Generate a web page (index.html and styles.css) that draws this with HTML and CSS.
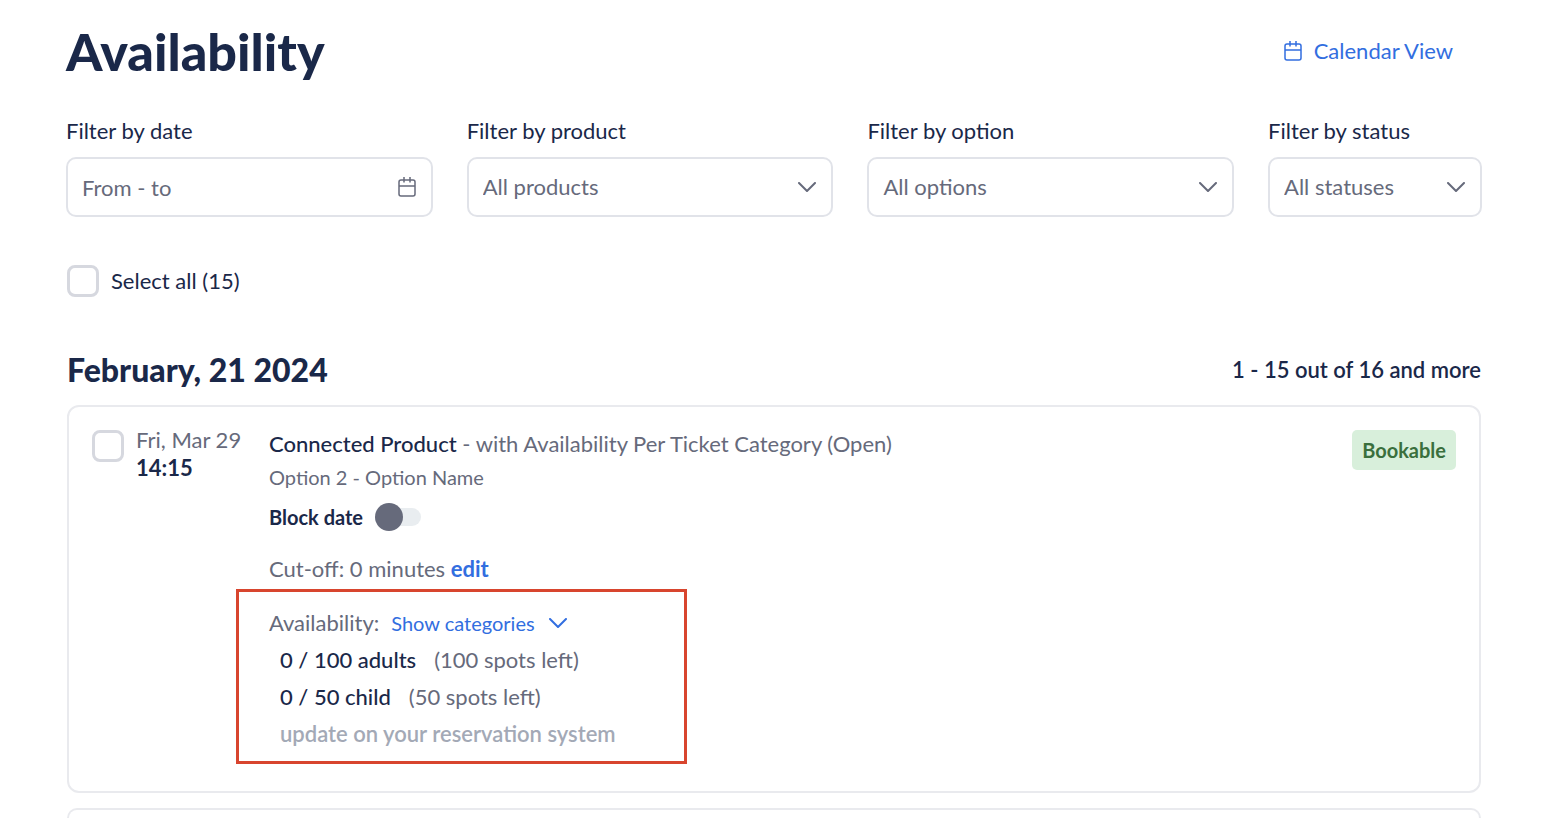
FILE: index.html
```
<!DOCTYPE html>
<html lang="en">
<head>
    <meta charset="UTF-8">
    <meta name="viewport" content="width=device-width, initial-scale=1.0">
    <title>Availability</title>
    <link rel="stylesheet" href="styles.css">
</head>
<body>
    <header class="header">
        <h1>Availability</h1>
        <a href="#" class="calendar-link">
            <svg class="calendar-icon" viewBox="0 0 18 20" aria-hidden="true">
                <path d="M3 3h12a2 2 0 0 1 2 2v12a2 2 0 0 1-2 2H3a2 2 0 0 1-2-2V5a2 2 0 0 1 2-2zM1 9h16M6 0v5.500M12 0v5.500"/>
            </svg>
            Calendar View
        </a>
    </header>

    <form class="filters">
        <div class="filter">
            <label for="date">Filter by date</label>
            <div class="field">
                <input type="text" id="date" placeholder="From - to">
                <svg class="calendar-icon" viewBox="0 0 18 20" aria-hidden="true">
                    <path d="M3 3h12a2 2 0 0 1 2 2v12a2 2 0 0 1-2 2H3a2 2 0 0 1-2-2V5a2 2 0 0 1 2-2zM1 9h16M6 0v5.500M12 0v5.500"/>
                </svg>
            </div>
        </div>
        <div class="filter">
            <label for="product">Filter by product</label>
            <div class="field">
                <select id="product"><option>All products</option></select>
                <svg class="chevron" viewBox="0 0 18 10" aria-hidden="true"><path d="M1 1l8 8 8-8"/></svg>
            </div>
        </div>
        <div class="filter">
            <label for="option">Filter by option</label>
            <div class="field">
                <select id="option"><option>All options</option></select>
                <svg class="chevron" viewBox="0 0 18 10" aria-hidden="true"><path d="M1 1l8 8 8-8"/></svg>
            </div>
        </div>
        <div class="filter">
            <label for="status">Filter by status</label>
            <div class="field">
                <select id="status"><option>All statuses</option></select>
                <svg class="chevron" viewBox="0 0 18 10" aria-hidden="true"><path d="M1 1l8 8 8-8"/></svg>
            </div>
        </div>
    </form>

    <div class="select-all">
        <input type="checkbox" id="selectAll" class="checkbox">
        <label for="selectAll">Select all (15)</label>
    </div>

    <div class="day">
        <h2>February, 21 2024</h2>
        <p class="count">1 - 15 out of 16 and more</p>
    </div>

    <main class="list">
        <article class="card">
            <input type="checkbox" class="checkbox" id="slot1">
            <label for="slot1" class="when">Fri, Mar 29<strong>14:15</strong></label>
            <div class="details">
                <p class="product"><span class="dark">Connected Product</span> - with Availability Per Ticket Category (Open)</p>
                <p class="option">Option 2 - Option Name</p>
                <div class="block-date">
                    <label for="block">Block date</label>
                    <input type="checkbox" role="switch" id="block" class="toggle">
                </div>
                <p class="cutoff">Cut-off: 0 minutes <a href="#">edit</a></p>
                <section class="availability">
                    <div class="availability-head">
                        <span>Availability:</span>
                        <button type="button">
                            Show categories
                            <svg class="chevron" viewBox="0 0 18 10" aria-hidden="true"><path d="M1 1l8 8 8-8"/></svg>
                        </button>
                    </div>
                    <p class="spots"><span class="dark">0 / 100 adults</span> <span>(100 spots left)</span></p>
                    <p class="spots"><span class="dark">0 / 50 child</span> <span>(50 spots left)</span></p>
                    <p class="note">update on your reservation system</p>
                </section>
            </div>
            <span class="badge">Bookable</span>
        </article>
        <div class="card-next"></div>
    </main>
</body>
</html>
```
FILE: styles.css
```
* {
    box-sizing: border-box;
}
body {
    margin: 0;
    padding: 0 82px 0 66px;
    font-family: Lato, "Liberation Sans", sans-serif;
    font-size: 22px;
    line-height: 28px;
    color: #1a2849;
    background-color: #fff;
}
h1, h2, p {
    margin: 0;
}
a {
    color: #326ee0;
    text-decoration: none;
}
input, select, button {
    font: inherit;
    margin: 0;
}

.header {
    display: flex;
    align-items: center;
    justify-content: space-between;
    height: 102px;
    padding-right: 29px;
}
h1 {
    font-size: 52px;
    line-height: 56px;
    font-weight: 900;
}
.calendar-link {
    display: flex;
    align-items: center;
    gap: 12px;
}
.calendar-icon {
    width: 18px;
    height: 20px;
    fill: none;
    stroke: currentColor;
    stroke-width: 1.5;
}
.chevron {
    width: 18px;
    height: 10px;
    fill: none;
    stroke: currentColor;
    stroke-width: 2;
    stroke-linecap: round;
    stroke-linejoin: round;
}

.filters {
    display: grid;
    grid-template-columns: 12fr 12fr 12fr 7fr;
    gap: 34px;
    margin-top: 15px;
}
.filter label {
    display: block;
    margin-bottom: 12px;
}
.field {
    position: relative;
    color: #666a7b;
}
.field input,
.field select {
    display: block;
    width: 100%;
    height: 60px;
    padding: 0 56px 0 14px;
    color: inherit;
    background-color: #fff;
    border: 2px solid #e1e3e9;
    border-radius: 10px;
    appearance: none;
}
.field input::placeholder {
    color: inherit;
    opacity: 1;
}
.field svg {
    position: absolute;
    top: 0;
    bottom: 0;
    right: 17px;
    margin: auto;
    pointer-events: none;
}

.checkbox {
    appearance: none;
    flex: none;
    width: 32px;
    height: 32px;
    background-color: #fff;
    border: 3px solid #d6d8df;
    border-radius: 8px;
}
.select-all {
    display: flex;
    align-items: center;
    gap: 12px;
    margin-top: 48px;
    padding-left: 1px;
}
.day {
    display: flex;
    align-items: center;
    justify-content: space-between;
    margin-top: 53px;
    padding: 0 1px;
}
h2 {
    font-size: 32px;
    line-height: 40px;
    font-weight: 900;
}
.count {
    font-weight: 600;
}

.list {
    margin-top: 15px;
    padding: 0 1px;
}
.card {
    display: flex;
    align-items: flex-start;
    padding: 23px;
    color: #666a7b;
    border: 2px solid #e9eaee;
    border-radius: 12px;
}
.when {
    width: 145px;
    margin-top: -4px;
    padding-left: 12px;
}
.when strong {
    display: block;
    color: #1a2849;
}
.details {
    flex: 1;
}
.dark {
    color: #1a2849;
    font-weight: 500;
}
.option {
    margin-top: 5px;
    font-size: 20px;
}
.block-date {
    display: flex;
    align-items: center;
    gap: 12px;
    margin-top: 12px;
    font-size: 20px;
    font-weight: 700;
    color: #1a2849;
}
.toggle {
    appearance: none;
    display: flex;
    align-items: center;
    width: 46px;
    height: 18px;
    background-color: #e9edf0;
    border-radius: 9px;
}
.toggle::before {
    content: "";
    width: 28px;
    height: 28px;
    background-color: #666a7b;
    border-radius: 50%;
}
.toggle:checked::before {
    margin-left: auto;
}
.cutoff {
    margin-top: 24px;
}
.cutoff a {
    font-weight: 700;
}
.availability {
    display: flex;
    flex-direction: column;
    gap: 9px;
    width: 451px;
    margin: 6px 0 4px -33px;
    padding: 17px 30px 13px;
    border: 3px solid #d8452e;
}
.availability-head {
    display: flex;
    gap: 12px;
}
.availability button {
    display: flex;
    align-items: center;
    gap: 14px;
    padding: 0;
    font-size: 20px;
    line-height: 26px;
    color: #326ee0;
    background: none;
    border: none;
    cursor: pointer;
}
.spots,
.note {
    padding-left: 11px;
}
.spots {
    display: flex;
    gap: 18px;
}
.note {
    font-weight: 600;
    color: #a3a9b6;
}
.badge {
    padding: 6px 10px;
    font-size: 20px;
    font-weight: 700;
    color: #3a6f3d;
    background-color: #d8efdb;
    border-radius: 5px;
}
.card-next {
    height: 10px;
    margin-top: 15px;
    border: 2px solid #e9eaee;
    border-bottom: none;
    border-radius: 12px 12px 0 0;
}
```
